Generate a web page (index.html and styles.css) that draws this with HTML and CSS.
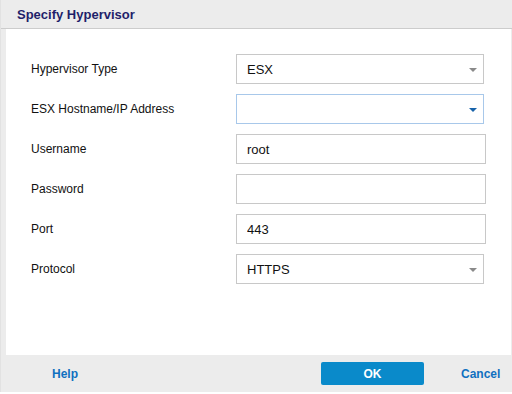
FILE: index.html
```html
<!DOCTYPE html>
<html lang="en">
<head>
    <meta charset="UTF-8">
    <meta name="viewport" content="width=device-width, initial-scale=1.0">
    <title>Specify Hypervisor</title>
    <link rel="stylesheet" href="styles.css">
</head>
<body>
    <div class="dialog">
        <header class="dialog-header">
            <h1>Specify Hypervisor</h1>
        </header>

        <main class="dialog-body">
            <div class="form">
                <div class="row">
                    <label>Hypervisor Type</label>
                    <div class="select">
                        <span>ESX</span>
                        <span class="caret"></span>
                    </div>
                </div>
                <div class="row">
                    <label>ESX Hostname/IP Address</label>
                    <div class="select focused">
                        <span></span>
                        <span class="caret"></span>
                    </div>
                </div>
                <div class="row">
                    <label>Username</label>
                    <input class="field" type="text" value="root">
                </div>
                <div class="row">
                    <label>Password</label>
                    <input class="field" type="password" value="">
                </div>
                <div class="row">
                    <label>Port</label>
                    <input class="field" type="text" value="443">
                </div>
                <div class="row">
                    <label>Protocol</label>
                    <div class="select">
                        <span>HTTPS</span>
                        <span class="caret"></span>
                    </div>
                </div>
            </div>
        </main>

        <footer class="dialog-footer">
            <a class="link help" href="#">Help</a>
            <button class="btn-ok">OK</button>
            <a class="link cancel" href="#">Cancel</a>
        </footer>
    </div>
</body>
</html>
```

FILE: styles.css
```css
body {
    margin: 0;
    padding: 0;
    font-family: "Liberation Sans", Arial, sans-serif;
    background-color: #ffffff;
}

.dialog {
    width: 512px;
    height: 392px;
    display: flex;
    flex-direction: column;
    background-color: #ececec;
    border-left: 1px solid #e2e2e2;
    box-sizing: border-box;
}

.dialog-header {
    height: 28px;
    border-bottom: 1px solid #cccccc;
    display: flex;
    align-items: center;
    padding-left: 16px;
}

.dialog-header h1 {
    margin: 0;
    font-size: 13px;
    font-weight: bold;
    color: #1f1f6a;
}

.dialog-body {
    height: 326px;
    margin-left: 5px;
    margin-right: 1px;
    background-color: #ffffff;
    box-sizing: border-box;
    padding: 25px 0 0 25px;
}

.form {
    display: flex;
    flex-direction: column;
    gap: 10px;
}

.row {
    display: flex;
    align-items: center;
    height: 30px;
}

.row label {
    width: 205px;
    font-size: 12px;
    color: #111111;
}

.field,
.select {
    height: 30px;
    box-sizing: border-box;
    border: 1px solid #c8c8c8;
    background: #ffffff;
    font-family: "Liberation Sans", Arial, sans-serif;
    font-size: 13px;
    color: #111111;
    padding: 0 0 0 10px;
}

.field {
    width: 250px;
    outline: none;
    margin: 0;
}

.select {
    width: 248px;
    display: flex;
    align-items: center;
    justify-content: space-between;
    padding-right: 6px;
}

.select.focused {
    border-color: #a8c8ea;
}

.caret {
    width: 0;
    height: 0;
    border-left: 4px solid transparent;
    border-right: 4px solid transparent;
    border-top: 4px solid #8a8a8a;
    margin-top: 1px;
}

.focused .caret {
    border-top-color: #1763aa;
}

.dialog-footer {
    height: 37px;
    display: flex;
    align-items: center;
    padding-left: 51px;
}

.link {
    font-size: 12px;
    font-weight: bold;
    color: #1070c0;
    text-decoration: none;
}

.btn-ok {
    margin-left: 243px;
    width: 103px;
    height: 23px;
    border: none;
    border-radius: 2px;
    background-color: #0a8aca;
    color: #ffffff;
    font-family: "Liberation Sans", Arial, sans-serif;
    font-size: 12px;
    font-weight: bold;
    cursor: pointer;
}

.cancel {
    margin-left: 37px;
}
```
